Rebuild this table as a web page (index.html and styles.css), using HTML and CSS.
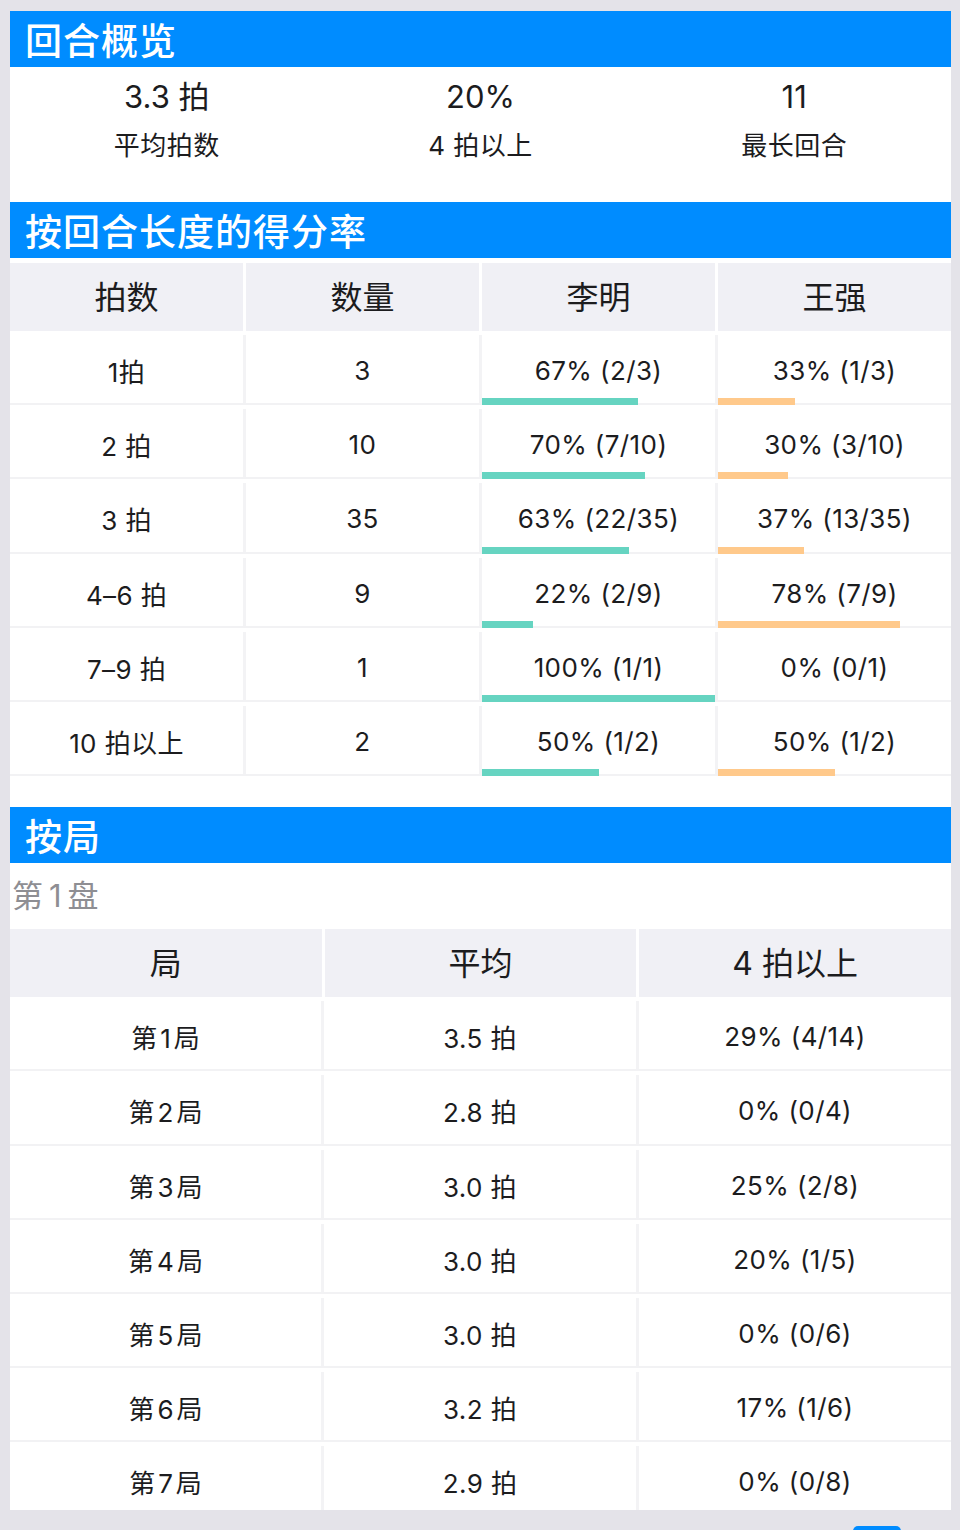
FILE: index.html
```html
<!DOCTYPE html>
<html lang="zh">
<head>
<meta charset="utf-8">
<title>回合统计</title>
<link rel="stylesheet" href="styles.css">
</head>
<body>
<div class="page">
  <main class="sheet">
    <section class="sec">
      <h2 class="sec-title">回合概览</h2>
      <div class="overview">
        <div class="ov-item"><div class="ov-val">3.3 拍</div><div class="ov-lab">平均拍数</div></div>
        <div class="ov-item"><div class="ov-val">20%</div><div class="ov-lab">4 拍以上</div></div>
        <div class="ov-item"><div class="ov-val">11</div><div class="ov-lab">最长回合</div></div>
      </div>
    </section>

    <section class="sec">
      <h2 class="sec-title">按回合长度的得分率</h2>
      <div class="tbl t4">
        <div class="thead">
          <div class="th">拍数</div><div class="th">数量</div><div class="th">李明</div><div class="th">王强</div>
        </div>
        <div class="tr">
          <div class="td">1拍</div><div class="td">3</div>
          <div class="td">67% (2/3)<span class="bar teal" style="width:67%"></span></div>
          <div class="td">33% (1/3)<span class="bar orange" style="width:33%"></span></div>
        </div>
        <div class="tr">
          <div class="td">2 拍</div><div class="td">10</div>
          <div class="td">70% (7/10)<span class="bar teal" style="width:70%"></span></div>
          <div class="td">30% (3/10)<span class="bar orange" style="width:30%"></span></div>
        </div>
        <div class="tr">
          <div class="td">3 拍</div><div class="td">35</div>
          <div class="td">63% (22/35)<span class="bar teal" style="width:63%"></span></div>
          <div class="td">37% (13/35)<span class="bar orange" style="width:37%"></span></div>
        </div>
        <div class="tr">
          <div class="td">4–6 拍</div><div class="td">9</div>
          <div class="td">22% (2/9)<span class="bar teal" style="width:22%"></span></div>
          <div class="td">78% (7/9)<span class="bar orange" style="width:78%"></span></div>
        </div>
        <div class="tr">
          <div class="td">7–9 拍</div><div class="td">1</div>
          <div class="td">100% (1/1)<span class="bar teal" style="width:100%"></span></div>
          <div class="td">0% (0/1)<span class="bar orange" style="width:0%"></span></div>
        </div>
        <div class="tr">
          <div class="td">10 拍以上</div><div class="td">2</div>
          <div class="td">50% (1/2)<span class="bar teal" style="width:50%"></span></div>
          <div class="td">50% (1/2)<span class="bar orange" style="width:50%"></span></div>
        </div>
      </div>
    </section>

    <section class="sec sec-games">
      <h2 class="sec-title">按局</h2>
      <div class="set-label">第1盘</div>
      <div class="tbl t3">
        <div class="thead">
          <div class="th">局</div><div class="th">平均</div><div class="th">4 拍以上</div>
        </div>
        <div class="tr"><div class="td">第1局</div><div class="td">3.5 拍</div><div class="td">29% (4/14)</div></div>
        <div class="tr"><div class="td">第2局</div><div class="td">2.8 拍</div><div class="td">0% (0/4)</div></div>
        <div class="tr"><div class="td">第3局</div><div class="td">3.0 拍</div><div class="td">25% (2/8)</div></div>
        <div class="tr"><div class="td">第4局</div><div class="td">3.0 拍</div><div class="td">20% (1/5)</div></div>
        <div class="tr"><div class="td">第5局</div><div class="td">3.0 拍</div><div class="td">0% (0/6)</div></div>
        <div class="tr"><div class="td">第6局</div><div class="td">3.2 拍</div><div class="td">17% (1/6)</div></div>
        <div class="tr"><div class="td">第7局</div><div class="td">2.9 拍</div><div class="td">0% (0/8)</div></div>
      </div>
    </section>
  </main>
  <div class="footer"><span class="pill"></span></div>
</div>
</body>
</html>
```

FILE: styles.css
```css
* { box-sizing: border-box; }
html, body { margin: 0; padding: 0; }
body {
  background: #e4e3e9;
  font-family: "Inter", "Noto Sans CJK SC", sans-serif;
  color: #1c1c1e;
  height: 1530px;
  overflow: hidden;
}
.page {
  padding: 11px 9px 0 10px;
}
.sheet {
  background: #ffffff;
  width: 941px;
  height: 1499px;
  overflow: hidden;
}
.sec-title {
  margin: 0;
  height: 56px;
  background: #008cff;
  color: #ffffff;
  font-family: "Noto Sans CJK SC", sans-serif;
  font-weight: 500;
  font-size: 37px;
  line-height: 56px;
  padding-left: 15px;
  letter-spacing: 1px;
}
.overview {
  display: grid;
  grid-template-columns: repeat(3, 1fr);
  height: 135px;
  padding-top: 8px;
}
.ov-item { text-align: center; }
.ov-val {
  font-size: 31px;
  line-height: 44px;
  height: 44px;
}
.ov-lab {
  font-size: 26px;
  line-height: 44px;
  margin-top: 5px;
  letter-spacing: 0.5px;
}
.tbl { margin-top: 5px; }
.thead {
  display: grid;
  gap: 3px;
  height: 68px;
}
.t4 .thead { grid-template-columns: repeat(4, 1fr); }
.t3 .thead { grid-template-columns: repeat(3, 1fr); }
.t4 .tr { grid-template-columns: 236fr 236fr 236fr 233fr; }
.t3 .tr { grid-template-columns: 314fr 315fr 312fr; }
.th {
  background: #f0f0f5;
  display: flex;
  align-items: center;
  justify-content: center;
  font-size: 32px;
  padding-bottom: 5px;
}
.tr {
  display: grid;
  height: 74.2px;
  border-bottom: 2px solid #f2f2f4;
}
.td {
  position: relative;
  display: flex;
  align-items: center;
  justify-content: center;
  font-size: 26px;
  letter-spacing: 0.4px;
  border-right: 3px solid #f3f3f5;
  margin-top: 4px;
  padding-top: 3px;
}
.td:last-child { border-right: none; }
.t3 .td:first-child { letter-spacing: 3px; padding-left: 3px; }
.bar {
  position: absolute;
  left: 0;
  bottom: -2px;
  height: 7px;
}
.bar.teal { background: #66d4c1; }
.bar.orange { background: #ffc98b; }
.sec-games { margin-top: 31px; }
.set-label {
  height: 66px;
  line-height: 66px;
  font-size: 31px;
  color: #8e8e93;
  padding-left: 2px;
  letter-spacing: 6px;
}
.sec-games .tbl { margin-top: 0; }
.footer {
  display: flex;
  justify-content: flex-end;
  padding: 16px 50px 0 0;
}
.pill {
  width: 48px;
  height: 10px;
  border-radius: 5px;
  background: #008cff;
}
```
